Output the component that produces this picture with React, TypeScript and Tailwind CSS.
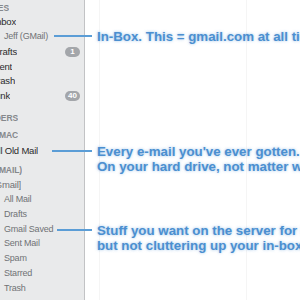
import React from 'react';

type Row =
  | { kind: 'header'; text: string; clip: string; cls: string }
  | { kind: 'item'; text: string; clip: string; badge?: string; muted?: boolean; cls: string }
  | { kind: 'sub'; text: string; cls: string };

// clip = right edge of the visible part (sidebar is scrolled sideways)
const rows: Row[] = [
  { kind: 'header', text: 'MAILBOXES', clip: 'w-[9px]', cls: 'h-[13px]' },
  { kind: 'item', text: 'Inbox', clip: 'w-[16px]', cls: 'h-[14.75px]' },
  { kind: 'sub', text: 'Jeff (GMail)', cls: 'h-[14.75px]' },
  { kind: 'item', text: 'Drafts', clip: 'w-[17px]', badge: '1', cls: 'h-[14.75px]' },
  { kind: 'item', text: 'Sent', clip: 'w-[12px]', cls: 'h-[14.75px]' },
  { kind: 'item', text: 'Trash', clip: 'w-[15px]', cls: 'h-[14.75px]' },
  { kind: 'item', text: 'Junk', clip: 'w-[10px]', badge: '40', cls: 'h-[14.75px]' },
  { kind: 'header', text: 'REMINDERS', clip: 'w-[18px]', cls: 'h-[14px] mt-[7.5px]' },
  { kind: 'header', text: 'ON MY MAC', clip: 'w-[18px]', cls: 'h-[14px] mt-[3px]' },
  { kind: 'item', text: 'All Old Mail', clip: 'w-[38px]', cls: 'h-[14.75px] mt-[1.5px]' },
  { kind: 'header', text: 'JEFF (GMAIL)', clip: 'w-[22px]', cls: 'h-[14px] mt-[5.5px]' },
  { kind: 'item', text: '[Gmail]', clip: 'w-[21px]', muted: true, cls: 'h-[14.75px]' },
  { kind: 'sub', text: 'All Mail', cls: 'h-[14.75px]' },
  { kind: 'sub', text: 'Drafts', cls: 'h-[14.75px]' },
  { kind: 'sub', text: 'Gmail Saved', cls: 'h-[14.75px]' },
  { kind: 'sub', text: 'Sent Mail', cls: 'h-[14.75px]' },
  { kind: 'sub', text: 'Spam', cls: 'h-[14.75px]' },
  { kind: 'sub', text: 'Starred', cls: 'h-[14.75px]' },
  { kind: 'sub', text: 'Trash', cls: 'h-[14.75px]' },
];

const notes = [
  { lineCls: 'top-[35px] left-[54px] w-[38px]', textCls: 'top-[28.5px]', lines: ['In-Box. This = gmail.com at all times.'] },
  {
    lineCls: 'top-[150px] left-[52px] w-[40px]',
    textCls: 'top-[143.5px]',
    lines: ["Every e-mail you've ever gotten.", 'On your hard drive, not matter what.'],
  },
  {
    lineCls: 'top-[229px] left-[57px] w-[35px]',
    textCls: 'top-[222.5px]',
    lines: ['Stuff you want on the server for later,', 'but not cluttering up your in-box.'],
  },
];

export default function App() {
  return (
    <div className="relative flex w-[300px] h-[300px] overflow-hidden bg-white font-['Liberation_Sans',Arial,sans-serif]">
      {/* Sidebar */}
      <div className="flex flex-col w-[85px] shrink-0 pt-[2px] bg-[#e9eaeb] border-r border-[#c2c3c5]">
        {rows.map((r, i) => {
          if (r.kind === 'header') {
            return (
              <div key={i} className={`flex items-center ${r.cls}`}>
                <div className={`flex justify-end overflow-hidden ${r.clip}`}>
                  <span className="whitespace-nowrap text-[8.5px] font-bold tracking-[-0.1px] text-[#85888c]">{r.text}</span>
                </div>
              </div>
            );
          }
          if (r.kind === 'item') {
            return (
              <div key={i} className={`flex items-center ${r.cls}`}>
                <div className={`flex justify-end overflow-hidden ${r.clip}`}>
                  <span
                    className={`whitespace-nowrap text-[9.5px] tracking-[-0.2px] ${r.muted ? 'text-[#707275]' : 'text-[#2b2b2b]'}`}
                  >
                    {r.text}
                  </span>
                </div>
                {r.badge && (
                  <span className="ml-auto mr-[4px] flex items-center justify-center h-[10px] w-[15px] rounded-full bg-[#a3a6aa] text-[8px] font-bold leading-none text-white">
                    {r.badge}
                  </span>
                )}
              </div>
            );
          }
          return (
            <div key={i} className={`flex items-center pl-[4px] ${r.cls}`}>
              <span className="whitespace-nowrap text-[9px] tracking-[-0.2px] text-[#707275]">{r.text}</span>
            </div>
          );
        })}
      </div>

      {/* Message list area */}
      <div className="flex flex-1">
        <div className="w-[15px] border-r border-[#f5f5f5]" />
        <div className="w-[147px] border-r border-[#f5f5f5]" />
      </div>

      {/* Annotation callouts */}
      {notes.map((n, i) => (
        <React.Fragment key={i}>
          <div className={`absolute h-[2px] bg-[#5b9dd6] ${n.lineCls}`} />
          <div
            className={`absolute left-[97px] whitespace-nowrap text-[13.3px] leading-[15px] font-bold text-[#4b8fd0] [text-shadow:0_0_3px_rgba(110,165,220,0.7)] ${n.textCls}`}
          >
            {n.lines.map((l, j) => (
              <div key={j}>{l}</div>
            ))}
          </div>
        </React.Fragment>
      ))}
    </div>
  );
}
